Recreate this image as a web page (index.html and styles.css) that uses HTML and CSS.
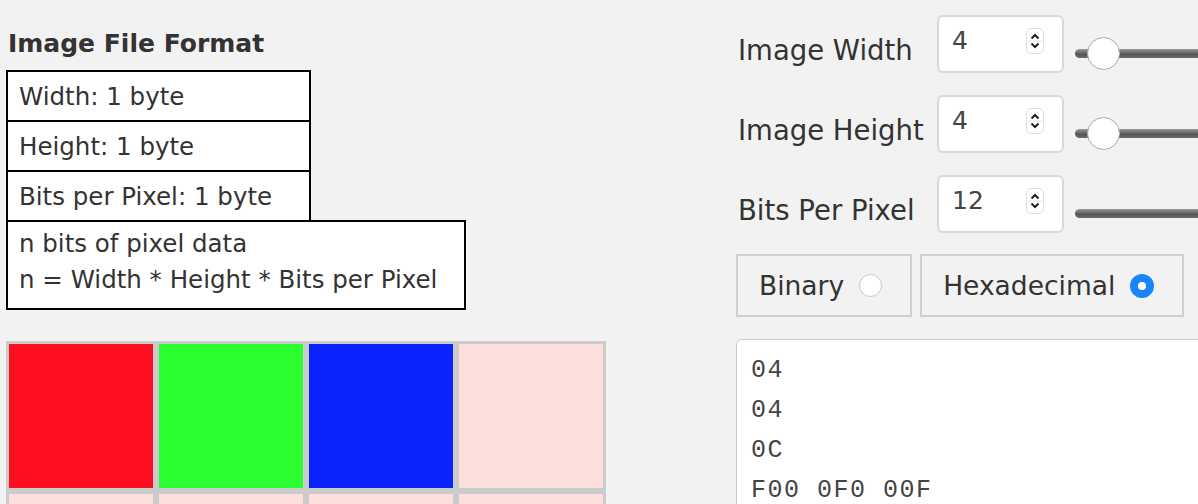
FILE: index.html
```html
<!DOCTYPE html>
<html lang="en">
<head>
  <meta charset="UTF-8">
  <meta name="viewport" content="width=device-width, initial-scale=1.0">
  <title>Image File Format</title>
  <link rel="stylesheet" href="styles.css">
</head>
<body>

<div class="page">
  <div class="left">
    <h3>Image File Format</h3>

    <div class="format">
      <div class="field">Width: 1 byte</div>
      <div class="field">Height: 1 byte</div>
      <div class="field">Bits per Pixel: 1 byte</div>
      <div class="field data">
        n bits of pixel data<br>
        n = Width * Height * Bits per Pixel
      </div>
    </div>

    <div class="pixels">
      <div class="px red"></div>
      <div class="px green"></div>
      <div class="px blue"></div>
      <div class="px"></div>
      <div class="px"></div>
      <div class="px"></div>
      <div class="px"></div>
      <div class="px"></div>
    </div>
  </div>

  <div class="right">
    <div class="control">
      <label for="w">Image Width</label>
      <div class="num-box">
        <input type="text" id="w" value="4">
        <span class="spin">
          <svg width="16" height="24" viewBox="0 0 16 24"><path d="M4.5 9.5l3.5-3.5 3.5 3.5M4.5 14.5l3.5 3.5 3.5-3.5" fill="none" stroke="#222" stroke-width="2"/><path d="M1 12h14" stroke="#e4e4e4"/></svg>
        </span>
      </div>
      <input type="range" class="slider" min="1" max="100" value="4">
    </div>

    <div class="control">
      <label for="h">Image Height</label>
      <div class="num-box">
        <input type="text" id="h" value="4">
        <span class="spin">
          <svg width="16" height="24" viewBox="0 0 16 24"><path d="M4.5 9.5l3.5-3.5 3.5 3.5M4.5 14.5l3.5 3.5 3.5-3.5" fill="none" stroke="#222" stroke-width="2"/><path d="M1 12h14" stroke="#e4e4e4"/></svg>
        </span>
      </div>
      <input type="range" class="slider" min="1" max="100" value="4">
    </div>

    <div class="control">
      <label for="bpp">Bits Per Pixel</label>
      <div class="num-box">
        <input type="text" id="bpp" value="12">
        <span class="spin">
          <svg width="16" height="24" viewBox="0 0 16 24"><path d="M4.5 9.5l3.5-3.5 3.5 3.5M4.5 14.5l3.5 3.5 3.5-3.5" fill="none" stroke="#222" stroke-width="2"/><path d="M1 12h14" stroke="#e4e4e4"/></svg>
        </span>
      </div>
      <input type="range" class="slider" min="1" max="32" value="12">
    </div>

    <div class="modes">
      <label class="mode">Binary <span class="radio"></span></label>
      <label class="mode">Hexadecimal <span class="radio checked"></span></label>
    </div>

    <textarea class="output" readonly>04
04
0C
F00 0F0 00F</textarea>
  </div>
</div>

</body>
</html>
```

FILE: styles.css
```css
body {
  margin: 0;
  background: #f2f2f2;
  font-family: "DejaVu Sans", sans-serif;
  color: #333;
  overflow: hidden;
}
.page {
  display: flex;
  width: 1400px;
}
.left {
  flex-shrink: 0;
  width: 600px;
  padding-left: 6px;
}
h3 {
  margin: 28px 0 10px 2px;
  font-size: 25px;
  font-weight: bold;
  line-height: 32px;
}
.format {
  width: 458px;
}
.field {
  width: 290px;
  height: 48px;
  padding-left: 11px;
  margin-bottom: -2px;
  border: 2px solid #000;
  background: #fff;
  font-size: 24.5px;
  line-height: 50px;
  white-space: nowrap;
}
.field.data {
  width: 445px;
  height: auto;
  padding: 4px 0 10px 11px;
  line-height: 36px;
}
.pixels {
  margin-top: 33px;
  width: 594px;
  border: 3px solid #cbcbcb;
  background: #cbcbcb;
  display: grid;
  grid-template-columns: repeat(4, 144px);
  gap: 6px;
}
.px {
  height: 144px;
  background: #fcdedc;
}
.px.red {
  background: #fe0f1f;
}
.px.green {
  background: #2afe2f;
}
.px.blue {
  background: #0b24fe;
}
.right {
  flex-shrink: 0;
  width: 600px;
  padding: 15px 0 0 130px;
}
.control {
  display: flex;
  height: 58px;
  margin-bottom: 22px;
}
.control label {
  flex-shrink: 0;
  width: 199px;
  padding-left: 2px;
  padding-top: 6px;
  font-size: 27.5px;
  line-height: 58px;
  white-space: nowrap;
}
.num-box {
  flex-shrink: 0;
  display: flex;
  align-items: center;
  width: 123px;
  height: 54px;
  border: 2px solid #d8d8d8;
  border-radius: 6px;
  background: #fff;
}
.num-box input {
  width: 60px;
  border: none;
  outline: none;
  padding: 0 0 0 13px;
  margin-bottom: 8px;
  font-family: "DejaVu Sans", sans-serif;
  font-size: 25px;
  color: #444;
  background: transparent;
}
.spin {
  display: flex;
  margin-left: 14px;
  margin-bottom: 6px;
  border: 1px solid #ddd;
  border-radius: 5px;
  background: #fff;
}
.slider {
  flex-shrink: 0;
  -webkit-appearance: none;
  appearance: none;
  width: 420px;
  height: 33px;
  margin: 22px 0 0 11px;
  background: transparent;
}
.slider::-webkit-slider-runnable-track {
  height: 9px;
  border-radius: 5px;
  background: linear-gradient(#9a9a9a, #555 60%, #6a6a6a);
}
.slider::-webkit-slider-thumb {
  -webkit-appearance: none;
  width: 33px;
  height: 33px;
  margin-top: -12px;
  border-radius: 50%;
  border: 1px solid #aaa;
  background: #fff;
}
.modes {
  display: flex;
  gap: 8px;
  margin-top: -1px;
}
.mode {
  display: flex;
  align-items: center;
  height: 59px;
  padding: 0 28px 0 21px;
  border: 2px solid #cfcfcf;
  font-size: 26.5px;
}
.radio {
  width: 21px;
  height: 21px;
  margin-left: 15px;
  border: 1px solid #c8c8c8;
  border-radius: 50%;
  background: #fff;
}
.radio.checked {
  width: 8px;
  height: 8px;
  border: 8px solid #1a84fb;
}
.output {
  display: block;
  width: 520px;
  height: 200px;
  margin-top: 22px;
  padding: 11px 14px;
  border: 1px solid #ccc;
  border-radius: 6px;
  background: #fff;
  resize: none;
  font-family: "Liberation Mono", monospace;
  font-size: 25px;
  letter-spacing: 1.5px;
  line-height: 40px;
  color: #444;
}
```
